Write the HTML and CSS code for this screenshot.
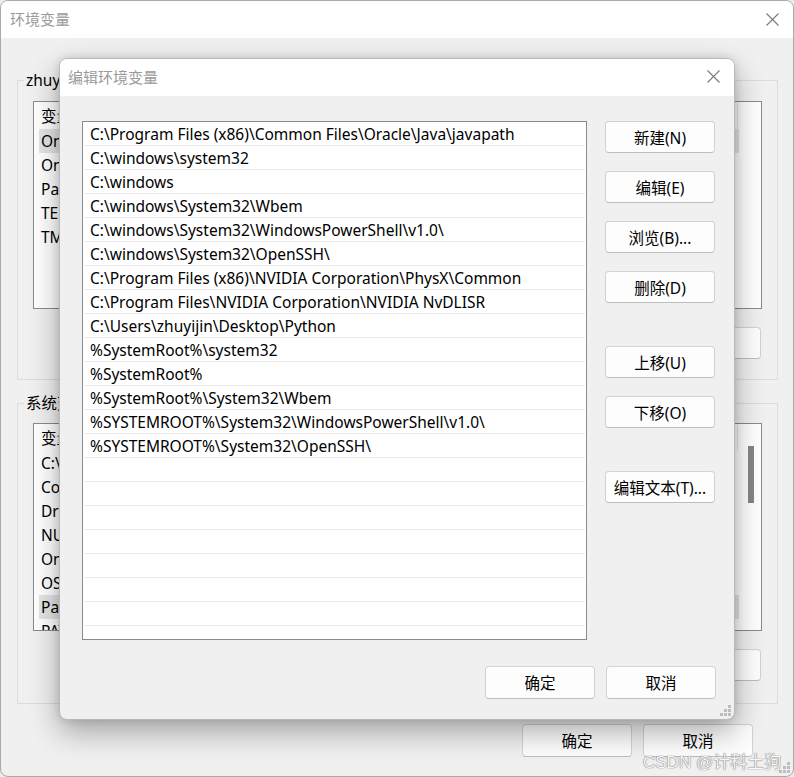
FILE: index.html
```html
<!DOCTYPE html>
<html lang="zh-CN">
<head>
<meta charset="utf-8">
<title>环境变量</title>
<link rel="stylesheet" href="styles.css">
</head>
<body>
<div class="win">
  <div class="win-title">
    <span class="title-text">环境变量</span>
    <svg class="close" width="13" height="13" viewBox="0 0 13 13"><path d="M0.5 0.5 L12.5 12.5 M12.5 0.5 L0.5 12.5" stroke="#7a7a7a" stroke-width="1.1" fill="none"/></svg>
  </div>
  <div class="win-body">
    <div class="group g1">
      <span class="group-label">zhuyijin 的用户变量(U)</span>
      <div class="lv lv-user">
        <div class="lv-main">
          <div class="lv-head"><span class="col1">变量</span></div>
          <div class="lv-row sel"><span class="col1">OneDrive</span></div>
          <div class="lv-row"><span class="col1">OneDriveConsumer</span></div>
          <div class="lv-row"><span class="col1">Path</span></div>
          <div class="lv-row"><span class="col1">TEMP</span></div>
          <div class="lv-row"><span class="col1">TMP</span></div>
        </div>
      </div>
      <div class="btn-row">
        <button class="btn">新建(N)...</button>
        <button class="btn">编辑(E)...</button>
        <button class="btn">删除(D)</button>
      </div>
    </div>
    <div class="group g2">
      <span class="group-label">系统变量(S)</span>
      <div class="lv lv-sys">
        <div class="lv-main">
          <div class="lv-head"><span class="col1">变量</span></div>
          <div class="lv-row"><span class="col1">C:\Windows</span></div>
          <div class="lv-row"><span class="col1">ComSpec</span></div>
          <div class="lv-row"><span class="col1">DriverData</span></div>
          <div class="lv-row"><span class="col1">NUMBER_OF_PROCESSORS</span></div>
          <div class="lv-row"><span class="col1">OnlineServices</span></div>
          <div class="lv-row"><span class="col1">OS</span></div>
          <div class="lv-row sel"><span class="col1">Path</span></div>
          <div class="lv-row"><span class="col1">PATHEXT</span></div>
        </div>
        <div class="vscroll"><div class="thumb"></div></div>
      </div>
      <div class="btn-row">
        <button class="btn">新建(W)...</button>
        <button class="btn">编辑(I)...</button>
        <button class="btn">删除(L)</button>
      </div>
    </div>
    <div class="win-foot">
      <button class="btn btn-tall">确定</button>
      <button class="btn btn-tall">取消</button>
    </div>
  </div>
  <svg class="grip grip-win" width="11" height="11" viewBox="0 0 11 11"><g fill="#bdbdbd"><rect x="8" y="0" width="3" height="3"/><rect x="4" y="4" width="3" height="3"/><rect x="8" y="4" width="3" height="3"/><rect x="0" y="8" width="3" height="3"/><rect x="4" y="8" width="3" height="3"/><rect x="8" y="8" width="3" height="3"/></g></svg>
</div>

<div class="dlg">
  <div class="dlg-title">
    <span class="title-text">编辑环境变量</span>
    <svg class="close" width="13" height="13" viewBox="0 0 13 13"><path d="M0.5 0.5 L12.5 12.5 M12.5 0.5 L0.5 12.5" stroke="#7a7a7a" stroke-width="1.1" fill="none"/></svg>
  </div>
  <div class="dlg-body">
    <div class="dlg-main">
      <div class="plist">
        <div class="prow">C:\Program Files (x86)\Common Files\Oracle\Java\javapath</div>
        <div class="prow">C:\windows\system32</div>
        <div class="prow">C:\windows</div>
        <div class="prow">C:\windows\System32\Wbem</div>
        <div class="prow">C:\windows\System32\WindowsPowerShell\v1.0\</div>
        <div class="prow">C:\windows\System32\OpenSSH\</div>
        <div class="prow">C:\Program Files (x86)\NVIDIA Corporation\PhysX\Common</div>
        <div class="prow">C:\Program Files\NVIDIA Corporation\NVIDIA NvDLISR</div>
        <div class="prow">C:\Users\zhuyijin\Desktop\Python</div>
        <div class="prow">%SystemRoot%\system32</div>
        <div class="prow">%SystemRoot%</div>
        <div class="prow">%SystemRoot%\System32\Wbem</div>
        <div class="prow">%SYSTEMROOT%\System32\WindowsPowerShell\v1.0\</div>
        <div class="prow">%SYSTEMROOT%\System32\OpenSSH\</div>
        <div class="prow"></div>
        <div class="prow"></div>
        <div class="prow"></div>
        <div class="prow"></div>
        <div class="prow"></div>
        <div class="prow"></div>
        <div class="prow"></div>
        <div class="prow"></div>
      </div>
      <div class="side">
        <button class="btn">新建(N)</button>
        <button class="btn">编辑(E)</button>
        <button class="btn">浏览(B)...</button>
        <button class="btn">删除(D)</button>
        <button class="btn sep">上移(U)</button>
        <button class="btn">下移(O)</button>
        <button class="btn sep">编辑文本(T)...</button>
      </div>
    </div>
    <div class="dlg-foot">
      <button class="btn btn-tall">确定</button>
      <button class="btn btn-tall">取消</button>
    </div>
  </div>
  <svg class="grip grip-dlg" width="11" height="11" viewBox="0 0 11 11"><g fill="#bdbdbd"><rect x="8" y="0" width="3" height="3"/><rect x="4" y="4" width="3" height="3"/><rect x="8" y="4" width="3" height="3"/><rect x="0" y="8" width="3" height="3"/><rect x="4" y="8" width="3" height="3"/><rect x="8" y="8" width="3" height="3"/></g></svg>
</div>

<div class="watermark">CSDN @计科土狗</div>
</body>
</html>
```

FILE: styles.css
```css
* { box-sizing: border-box; }
html, body { margin: 0; padding: 0; }
body {
  width: 794px;
  height: 777px;
  overflow: hidden;
  position: relative;
  background: #ececec;
  font-family: "Noto Sans", "Noto Sans CJK SC", sans-serif;
  font-size: 15.5px;
  color: #000;
}
button {
  font-family: inherit;
  font-size: 15.5px;
  color: #000;
}

/* outer window */
.win {
  width: 794px;
  height: 777px;
  border: 1px solid #a9a9a9;
  border-radius: 8px;
  background: #f0f0f0;
  overflow: hidden;
  display: flex;
  flex-direction: column;
  position: relative;
}
.win-title {
  height: 37px;
  flex: none;
  background: #fff;
  display: flex;
  align-items: center;
  justify-content: space-between;
  padding: 0 14px 1px 9px;
}
.title-text {
  font-family: "Noto Sans CJK SC", sans-serif;
  font-size: 15px;
  line-height: 20px;
  color: #9b9b9b;
}
.close { display: block; }

.win-body {
  flex: 1;
  padding: 42px 0 0 16px;
  display: flex;
  flex-direction: column;
}
.group {
  position: relative;
  width: 761px;
  border: 1px solid #dcdcdc;
  padding-left: 15px;
}
.g1 { height: 300px; padding-top: 20px; }
.g2 { height: 301px; margin-top: 23px; padding-top: 19px; }
.group-label {
  position: absolute;
  left: 6px;
  top: -11px;
  padding: 0 2px;
  line-height: 20px;
  background: #f0f0f0;
}
.lv {
  width: 729px;
  height: 208px;
  background: #fff;
  border: 1px solid #8a8a8a;
  display: flex;
  overflow: hidden;
}
.lv-main { flex: 1; overflow: hidden; }
.lv-head {
  height: 27px;
  display: flex;
  align-items: center;
  padding-left: 7px;
  white-space: nowrap;
}
.lv-head .col1 {
  width: 697px;
  flex: none;
  border-right: 1px solid #e5e5e5;
  line-height: 26px;
}
.lv-row {
  height: 24px;
  width: 700px;
  margin-left: 5px;
  padding-left: 2px;
  display: flex;
  align-items: center;
  white-space: nowrap;
}
.lv-row.sel { background: #e5e5e5; }
.vscroll {
  width: 16px;
  flex: none;
  padding: 22px 0 0 3px;
}
.thumb {
  width: 6px;
  height: 57px;
  background: #868686;
}
.btn-row {
  display: flex;
  justify-content: flex-end;
  gap: 11px;
  width: 728px;
  margin-top: 18px;
}
.btn {
  width: 110px;
  height: 32px;
  padding: 0;
  background: #fdfdfd;
  border: 1px solid #d2d2d2;
  border-bottom-color: #bdbdbd;
  border-radius: 4px;
  display: flex;
  align-items: center;
  justify-content: center;
  white-space: nowrap;
}
.btn-tall { height: 33px; }
.win-foot {
  display: flex;
  gap: 11px;
  justify-content: flex-end;
  padding-right: 40px;
  margin-top: 20px;
}
.grip { position: absolute; }
.grip-win { right: 3px; bottom: 3px; }

/* dialog */
.dlg {
  position: absolute;
  left: 59px;
  top: 58px;
  width: 676px;
  height: 662px;
  border: 1px solid #b9b9b9;
  border-radius: 8px;
  background: #f0f0f0;
  overflow: hidden;
  display: flex;
  flex-direction: column;
  box-shadow: 0 12px 30px rgba(0, 0, 0, 0.32), 0 0 10px rgba(0, 0, 0, 0.12);
}
.dlg-title {
  height: 37px;
  flex: none;
  background: #fff;
  display: flex;
  align-items: center;
  justify-content: space-between;
  padding: 0 14px 2px 8px;
}
.dlg-body {
  flex: 1;
  padding: 25px 18px 0 22px;
  display: flex;
  flex-direction: column;
}
.dlg-main {
  display: flex;
  gap: 18px;
}
.plist {
  width: 505px;
  height: 519px;
  background: #fff;
  border: 1px solid #8a8a8a;
  overflow: hidden;
}
.prow {
  height: 24px;
  margin: 0 1px;
  border-bottom: 1px solid #ebebeb;
  padding-left: 6px;
  display: flex;
  align-items: center;
  white-space: nowrap;
}
.side {
  display: flex;
  flex-direction: column;
  gap: 18px;
}
.side .sep { margin-top: 25px; }
.dlg-foot {
  display: flex;
  justify-content: flex-end;
  gap: 11px;
  margin-top: 26px;
}
.grip-dlg { right: 3px; bottom: 3px; }

.watermark {
  position: absolute;
  left: 643px;
  top: 748px;
  font-family: "Liberation Sans", "Noto Sans CJK SC", sans-serif;
  font-size: 17px;
  color: #f8f8f8;
  text-shadow: 0 0 1px #6f6f6f, 0 0 1px #6f6f6f;
  white-space: nowrap;
}
```
